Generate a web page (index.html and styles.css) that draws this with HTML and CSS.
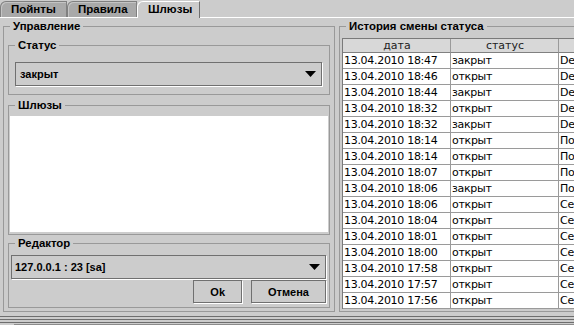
FILE: index.html
```html
<!DOCTYPE html>
<html lang="ru">
<head>
    <meta charset="UTF-8">
    <meta name="viewport" content="width=device-width, initial-scale=1.0">
    <link rel="stylesheet" href="styles.css">
</head>
<body>

<div class="tabs">
    <div class="tab tab-points">Пойнты</div>
    <div class="tab tab-rules">Правила</div>
    <div class="tab tab-gates active">Шлюзы</div>
</div>

<div class="panes">
    <fieldset class="group manage">
        <legend>Управление</legend>
        <div class="group-body">
            <fieldset class="group status">
                <legend>Статус</legend>
                <div class="group-body">
                    <div class="combo">
                        <span>закрыт</span>
                        <svg class="arrow" width="11" height="6" viewBox="0 0 11 6"><path d="M0 0h11L5.5 6z"/></svg>
                    </div>
                </div>
            </fieldset>
            <fieldset class="group gates">
                <legend>Шлюзы</legend>
                <div class="group-body">
                    <div class="list"></div>
                </div>
            </fieldset>
            <fieldset class="group editor">
                <legend>Редактор</legend>
                <div class="group-body">
                    <div class="combo">
                        <span>127.0.0.1 : 23 [sa]</span>
                        <svg class="arrow" width="11" height="6" viewBox="0 0 11 6"><path d="M0 0h11L5.5 6z"/></svg>
                    </div>
                    <div class="actions">
                        <button class="btn">Ok</button>
                        <button class="btn">Отмена</button>
                    </div>
                </div>
            </fieldset>
        </div>
    </fieldset>

    <fieldset class="group history">
        <legend>История смены статуса</legend>
        <div class="group-body">
            <table class="grid">
                <thead>
                    <tr><th class="c-date">дата</th><th class="c-state">статус</th><th class="c-who"></th></tr>
                </thead>
                <tbody>
                    <tr><td>13.04.2010 18:47</td><td>закрыт</td><td>Default</td></tr>
                    <tr><td>13.04.2010 18:46</td><td>открыт</td><td>Default</td></tr>
                    <tr><td>13.04.2010 18:44</td><td>закрыт</td><td>Default</td></tr>
                    <tr><td>13.04.2010 18:32</td><td>открыт</td><td>Default</td></tr>
                    <tr><td>13.04.2010 18:32</td><td>закрыт</td><td>Default</td></tr>
                    <tr><td>13.04.2010 18:14</td><td>открыт</td><td>Пост</td></tr>
                    <tr><td>13.04.2010 18:14</td><td>открыт</td><td>Пост</td></tr>
                    <tr><td>13.04.2010 18:07</td><td>открыт</td><td>Пост</td></tr>
                    <tr><td>13.04.2010 18:06</td><td>закрыт</td><td>Пост</td></tr>
                    <tr><td>13.04.2010 18:06</td><td>открыт</td><td>Сервер</td></tr>
                    <tr><td>13.04.2010 18:04</td><td>открыт</td><td>Сервер</td></tr>
                    <tr><td>13.04.2010 18:01</td><td>открыт</td><td>Сервер</td></tr>
                    <tr><td>13.04.2010 18:00</td><td>открыт</td><td>Сервер</td></tr>
                    <tr><td>13.04.2010 17:58</td><td>открыт</td><td>Сервер</td></tr>
                    <tr><td>13.04.2010 17:57</td><td>открыт</td><td>Сервер</td></tr>
                    <tr><td>13.04.2010 17:56</td><td>открыт</td><td>Сервер</td></tr>
                </tbody>
            </table>
        </div>
    </fieldset>
</div>

<div class="splitter"></div>
<div class="next-pane"></div>

</body>
</html>
```

FILE: styles.css
```css
body {
    margin: 0;
    width: 574px;
    height: 325px;
    overflow: hidden;
    background: #cccccc;
    color: #000;
    font-family: "Liberation Sans", Arial, sans-serif;
    font-size: 11px;
    font-weight: 700;
}

/* tab strip */
.tabs {
    display: flex;
    align-items: flex-end;
    height: 17px;
    border-bottom: 1px solid #fff;
}

.tab {
    height: 16px;
    box-sizing: border-box;
    padding-left: 10px;
    line-height: 14px;
    font-size: 11.5px;
    white-space: nowrap;
    background: #a9a9a9;
    border: 1px solid #808080;
    border-bottom: none;
    border-top-left-radius: 6px;
    box-shadow: inset 1px 1px 0 #c4c4c4;
}

.tab-points { width: 67px; }
.tab-rules  { width: 70px; }
.tab-gates  { width: 63px; }

.tab.active {
    height: 17px;
    margin-bottom: -1px;
    line-height: 15px;
    background: #cccccc;
    border-color: #fff #707070 #fff #fff;
    box-shadow: none;
}

/* panels */
.panes {
    display: flex;
    height: 295px;
    box-sizing: border-box;
    padding: 2px 0 1px;
}

.group {
    margin: 0;
    padding: 0;
    min-width: 0;
    border: 1px solid #999;
}

.group > legend {
    margin-left: 6px;
    padding: 0 3px;
    line-height: 13px;
    font-size: 11.4px;
}

.manage {
    flex: none;
    width: 332px;
    box-sizing: border-box;
    margin-left: 3px;
}

.manage > .group-body {
    padding: 6px 4px 3px;
}

.status > .group-body {
    padding: 10px 7px 8px 6px;
}

.gates {
    margin-top: 4px;
}

.gates > .group-body {
    padding: 4px 1px 2px;
}

.list {
    height: 116px;
    background: #fff;
}

.editor {
    margin-top: 2px;
}

.editor > .group-body {
    padding: 5px 3px 4px 2px;
}

.combo {
    display: flex;
    align-items: center;
    justify-content: space-between;
    height: 24px;
    box-sizing: border-box;
    padding: 0 5px 0 4px;
    border: 1px solid #707070;
    box-shadow: 1px 1px 0 #fff;
}

.editor .combo {
    padding-left: 3px;
}

.arrow {
    display: block;
    fill: #000;
}

.actions {
    display: flex;
    justify-content: flex-end;
    gap: 9px;
    margin-top: 1px;
}

.btn {
    height: 23px;
    padding: 0 16px;
    background: #cccccc;
    border: 1px solid #707070;
    box-shadow: 1px 1px 0 #fff;
    color: #000;
    font-family: "Liberation Sans", Arial, sans-serif;
    font-size: 11px;
    font-weight: 700;
}

/* history table */
.history {
    flex: none;
    width: 260px;
    margin-left: 4px;
}

.history > .group-body {
    padding: 5px 0 2px 2px;
}

.grid {
    width: 338px;
    border-collapse: separate;
    border-spacing: 0;
    border-top: 1px solid #7a7a7a;
    border-left: 1px solid #7a7a7a;
    table-layout: fixed;
    font-family: "DejaVu Sans", Verdana, sans-serif;
    font-size: 11px;
    font-weight: 400;
    white-space: nowrap;
}

.grid th,
.grid td {
    padding: 0 0 0 1px;
    border-right: 1px solid #9a9a9a;
    border-bottom: 1px solid #9a9a9a;
    overflow: hidden;
}

.grid th {
    height: 13px;
    line-height: 13px;
    background: #d8d8d8;
    font-weight: 400;
    color: #222;
    text-align: center;
    border-bottom-color: #808080;
}

.grid td {
    height: 15px;
    line-height: 15px;
    background: #fff;
    letter-spacing: -0.3px;
}

.c-date,
.c-state {
    width: 106px;
}

.c-who {
    width: 119px;
}

/* split pane divider */
.splitter {
    height: 11px;
    background:
        linear-gradient(#6e6e6e, #6e6e6e) 0 3px / 100% 1px no-repeat,
        linear-gradient(#6e6e6e, #6e6e6e) 0 6px / 100% 1px no-repeat,
        linear-gradient(#6e6e6e, #6e6e6e) 0 9px / 100% 1px no-repeat;
}

.next-pane {
    margin-left: 14px;
    border-top: 1px solid #8c8c8c;
}
```
